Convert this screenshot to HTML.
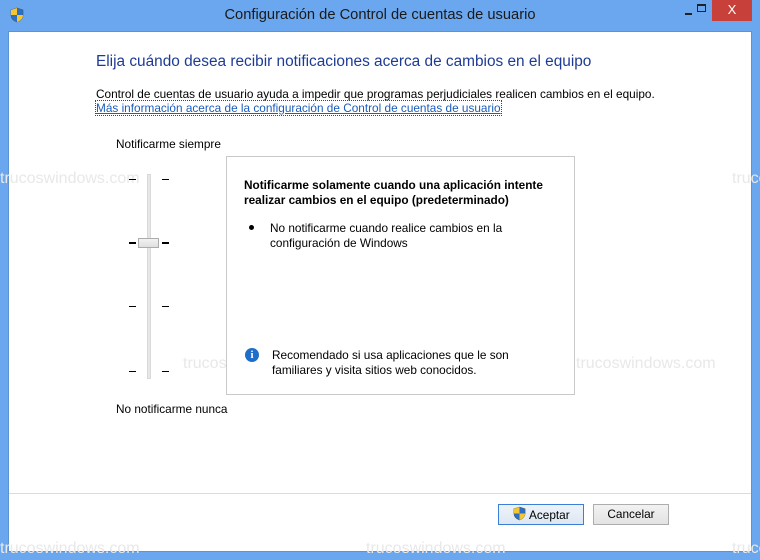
<!DOCTYPE html>
<html><head><meta charset="utf-8"><style>
*{margin:0;padding:0;box-sizing:border-box}
body{width:760px;height:560px;background:#6ba7ee;font-family:"Liberation Sans",sans-serif;position:relative;overflow:hidden;font-size:11.8px;color:#000}
.abs{position:absolute;white-space:nowrap}
#client{position:absolute;left:8px;top:31px;width:744px;height:521px;background:#fff;border:1px solid #5b93d6}
.tick{position:absolute;width:7px;height:1px;background:#000}
.wm{position:absolute;color:#e8e8e8;font-size:16px;white-space:nowrap}
</style></head><body>
<svg class="abs" style="left:10px;top:7px" width="14" height="16" viewBox="0 0 14 16"><path d="M7 1 L13 3 V8 C13 12 10 14 7 15 C4 14 1 12 1 8 V3 Z" fill="#2a6fc9" stroke="#555" stroke-width=".6"/><path d="M7 1 V8 H1 V3Z" fill="#f3c632"/><path d="M7 8 H13 C13 12 10 14 7 15Z" fill="#f3c632"/></svg>
<div class="abs" style="left:0;width:760px;top:7px;text-align:center;font-size:14.7px;color:#1a1a1a">Configuración de Control de cuentas de usuario</div>
<div class="abs" style="left:685px;top:13px;width:7px;height:2px;background:#222"></div>
<div class="abs" style="left:697px;top:4px;width:9px;height:8px;border:1px solid #222;border-top-width:2px"></div>
<div class="abs" style="left:712px;top:0;width:40px;height:21px;background:#c7413a;color:#fff;text-align:center;font-size:13px;line-height:20px">X</div>
<div id="client"></div>
<div class="wm" style="left:0;top:170px">trucoswindows.com</div>
<div class="wm" style="left:732px;top:170px">trucos</div>
<div class="wm" style="left:183px;top:355px">trucoswindows.com</div>
<div class="wm" style="left:576px;top:355px">trucoswindows.com</div>
<div class="wm" style="left:0;top:540px">trucoswindows.com</div>
<div class="wm" style="left:366px;top:540px">trucoswindows.com</div>
<div class="wm" style="left:732px;top:540px">trucos</div>
<div class="abs" style="left:96px;top:53px;font-size:15.4px;color:#1d3b94">Elija cuándo desea recibir notificaciones acerca de cambios en el equipo</div>
<div class="abs" style="left:96px;top:87px">Control de cuentas de usuario ayuda a impedir que programas perjudiciales realicen cambios en el equipo.</div>
<div class="abs" style="left:96px;top:101px;color:#1a5dbb;text-decoration:underline;outline:1px dotted #444">Más información acerca de la configuración de Control de cuentas de usuario</div>
<div class="abs" style="left:116px;top:137px">Notificarme siempre</div>
<div class="abs" style="left:116px;top:402px">No notificarme nunca</div>
<div class="abs" style="left:147px;top:174px;width:4px;height:205px;background:#e7e7e7;border:1px solid #d8d8d8"></div>
<div class="tick" style="left:129px;top:179px"></div><div class="tick" style="left:162px;top:179px"></div>
<div class="tick" style="left:129px;top:242px;height:2px"></div><div class="tick" style="left:162px;top:242px;height:2px"></div>
<div class="tick" style="left:129px;top:306px"></div><div class="tick" style="left:162px;top:306px"></div>
<div class="tick" style="left:129px;top:371px"></div><div class="tick" style="left:162px;top:371px"></div>
<div class="abs" style="left:138px;top:238px;width:21px;height:10px;background:linear-gradient(#f2f2f2,#e0e0e0);border:1px solid #acacac"></div>
<div class="abs" style="left:226px;top:156px;width:349px;height:239px;border:1px solid #c9c9c9;background:#fff"></div>
<div class="abs" style="left:244px;top:178px;font-weight:bold;line-height:15px">Notificarme solamente cuando una aplicación intente<br>realizar cambios en el equipo (predeterminado)</div>
<div class="abs" style="left:249px;top:225px;width:5px;height:5px;border-radius:50%;background:#000"></div>
<div class="abs" style="left:270px;top:221px;line-height:15px">No notificarme cuando realice cambios en la<br>configuración de Windows</div>
<div class="abs" style="left:245px;top:348px;width:14px;height:14px;border-radius:50%;background:#1f6ec9;color:#fff;font-weight:bold;font-size:11px;text-align:center;line-height:14px;font-family:'Liberation Serif',serif">i</div>
<div class="abs" style="left:272px;top:348px;line-height:15px">Recomendado si usa aplicaciones que le son<br>familiares y visita sitios web conocidos.</div>
<div class="abs" style="left:9px;top:493px;width:742px;height:1px;background:#dcdcdc"></div>
<div class="abs" style="left:498px;top:504px;width:86px;height:21px;border:1px solid #3c7fd6;background:linear-gradient(#eef3fa,#dde7f3)"></div>
<svg class="abs" style="left:513px;top:506px" width="13" height="15" viewBox="0 0 14 16"><path d="M7 1 L13 3 V8 C13 12 10 14 7 15 C4 14 1 12 1 8 V3 Z" fill="#2a6fc9" stroke="#555" stroke-width=".6"/><path d="M7 1 V8 H1 V3Z" fill="#f3c632"/><path d="M7 8 H13 C13 12 10 14 7 15Z" fill="#f3c632"/></svg>
<div class="abs" style="left:529px;top:508px">Aceptar</div>
<div class="abs" style="left:593px;top:504px;width:76px;height:21px;border:1px solid #adadad;background:linear-gradient(#f2f2f2,#e3e3e3);text-align:center;line-height:19px">Cancelar</div>
</body></html>
